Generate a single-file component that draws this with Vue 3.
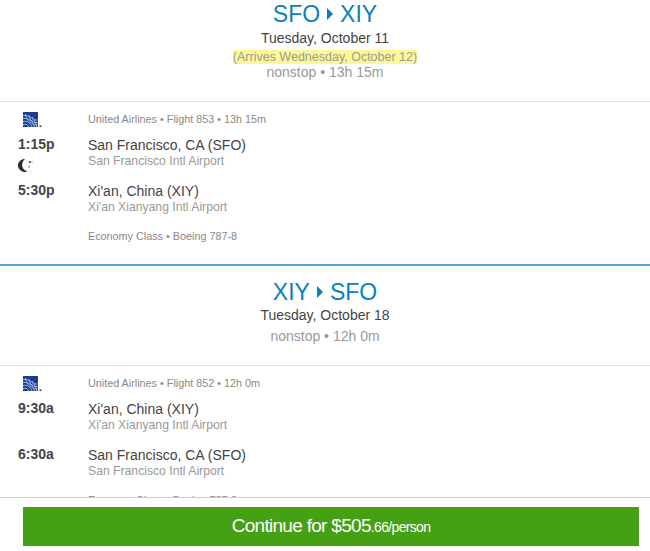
<script setup>
const legs = [
  {
    from: 'SFO', to: 'XIY', date: 'Tuesday, October 11', arrives: '(Arrives Wednesday, October 12)', summary: 'nonstop • 13h 15m',
    flight: 'United Airlines • Flight 853 • 13h 15m', overnight: true,
    dep: '1:15p', depCity: 'San Francisco, CA (SFO)', depAirport: 'San Francisco Intl Airport',
    arr: '5:30p', arrCity: "Xi'an, China (XIY)", arrAirport: "Xi'an Xianyang Intl Airport",
    cabin: 'Economy Class • Boeing 787-8'
  },
  {
    from: 'XIY', to: 'SFO', date: 'Tuesday, October 18', arrives: '', summary: 'nonstop • 12h 0m',
    flight: 'United Airlines • Flight 852 • 12h 0m', overnight: false,
    dep: '9:30a', depCity: "Xi'an, China (XIY)", depAirport: "Xi'an Xianyang Intl Airport",
    arr: '6:30a', arrCity: 'San Francisco, CA (SFO)', arrAirport: 'San Francisco Intl Airport',
    cabin: 'Economy Class • Boeing 787-8'
  }
]
</script>

<template>
  <div class="page">
    <section v-for="leg in legs" :key="leg.flight" class="leg">
      <header class="head">
        <h2 class="route">
          <span>{{ leg.from }}</span>
          <svg class="arrow" width="6" height="12" viewBox="0 0 6 12"><path d="M0 0L6 6L0 12Z" fill="#0a7fbc" /></svg>
          <span>{{ leg.to }}</span>
        </h2>
        <div class="date">{{ leg.date }}</div>
        <div v-if="leg.arrives" class="arrives"><mark>{{ leg.arrives }}</mark></div>
        <div class="summary">{{ leg.summary }}</div>
      </header>
      <div class="flight">
        <div class="row top">
          <div class="time-col">
            <svg class="logo" width="19" height="16" viewBox="0 0 19 16">
              <rect x="0" y="0" width="15" height="15" fill="#1c3f94" />
              <rect x="16.5" y="13.5" width="2" height="1.5" fill="#1c3f94" />
              <g fill="none" stroke="#a9bce2" stroke-width="0.9">
                <path d="M0 3.5C6 2.5 12 7 14 15" />
                <path d="M0 6.5C5 5.5 10 9 11.5 15" />
                <path d="M0 9.5C4 8.5 7.5 11 9 15" />
                <path d="M0 12.5C2.5 11.5 5 13 6 15" />
                <path d="M2.5 2C3 7 6 12 14.5 13" />
                <path d="M6 3C6 7 9 10.5 14.5 10.5" />
                <path d="M9.5 5C9.5 7 11.5 8.5 14.5 8" />
              </g>
            </svg>
          </div>
          <div class="meta">{{ leg.flight }}</div>
        </div>
        <div class="row stop">
          <div class="time-col">
            <div class="time">{{ leg.dep }}</div>
            <svg v-if="leg.overnight" class="moon" width="15" height="13" viewBox="0 0 15 13">
              <path d="M7 0A6.5 6.5 0 1 0 9.5 12.2A6.8 6.8 0 0 1 7 0Z" fill="#2f2f2f" />
              <rect x="11" y="2" width="2" height="2" fill="#666" />
              <rect x="10.5" y="7" width="1.5" height="1.5" fill="#777" />
              <rect x="13.5" y="2.5" width="1.2" height="1.2" fill="#aaa" />
            </svg>
          </div>
          <div>
            <div class="city">{{ leg.depCity }}</div>
            <div class="airport">{{ leg.depAirport }}</div>
          </div>
        </div>
        <div class="row stop">
          <div class="time-col time">{{ leg.arr }}</div>
          <div>
            <div class="city">{{ leg.arrCity }}</div>
            <div class="airport">{{ leg.arrAirport }}</div>
          </div>
        </div>
        <div class="row cabin">
          <div class="time-col"></div>
          <div class="meta">{{ leg.cabin }}</div>
        </div>
      </div>
    </section>
    <footer class="footer">
      <button class="cta">Continue for $505<small>.66/person</small></button>
    </footer>
  </div>
</template>

<style scoped>
.page {
  position: relative;
  width: 650px;
  height: 551px;
  overflow: hidden;
  background: #fff;
  font-family: "Liberation Sans", Arial, sans-serif;
  color: #333;
}
.leg + .leg { border-top: 2px solid #4fa6d3; }
.head {
  height: 101px;
  text-align: center;
  border-bottom: 1px solid #ddd;
}
.leg + .leg .head { height: 99px; }
.route {
  margin: 0 0 1px;
  height: 28px;
  font-size: 23px;
  font-weight: 400;
  line-height: 28px;
  color: #0a7fbc;
  display: flex;
  justify-content: center;
  align-items: center;
  gap: 7px;
}
.leg + .leg .route { margin: 0; height: 31px; padding-top: 10px; }
.date { font-size: 14px; line-height: 18px; color: #444; }
.leg + .leg .date { line-height: 17px; }
.arrives { font-size: 12.5px; line-height: 14px; color: #999; margin-top: 3px; }
.arrives mark { background: #fdfa96; color: #999; }
.summary { font-size: 14px; line-height: 17px; color: #999; }
.leg + .leg .summary { margin-top: 4px; }
.flight { height: 162px; }
.row { display: flex; }
.time-col { width: 88px; flex: none; padding-left: 18px; box-sizing: border-box; }
.top { padding-top: 9px; height: 35px; box-sizing: border-box; align-items: flex-start; }
.logo { display: block; margin: 1px 0 0 4.5px; }
.meta { font-size: 10.8px; line-height: 16px; color: #888; }
.stop { height: 46px; }
.time { font-size: 14px; font-weight: 700; line-height: 17px; color: #444; margin-top: -1px; }
.city { font-size: 14px; line-height: 17px; color: #444; }
.airport { font-size: 12.2px; line-height: 15px; color: #999; }
.moon { display: block; margin-top: 6px; }
.cabin { margin-top: -1px; }
.footer {
  position: absolute;
  left: 0;
  right: 0;
  bottom: 0;
  height: 54px;
  background: #fff;
  border-top: 1px solid #ccc;
  box-sizing: border-box;
  padding: 9px 11px 5px 23px;
}
.cta {
  display: block;
  width: 100%;
  height: 39px;
  border: 0;
  padding: 0 0 2px;
  background: #46a014;
  color: #fff;
  font-family: inherit;
  font-size: 19px;
  letter-spacing: -0.7px;
  cursor: pointer;
}
.cta small { font-size: 14px; letter-spacing: -0.66px; }
</style>
